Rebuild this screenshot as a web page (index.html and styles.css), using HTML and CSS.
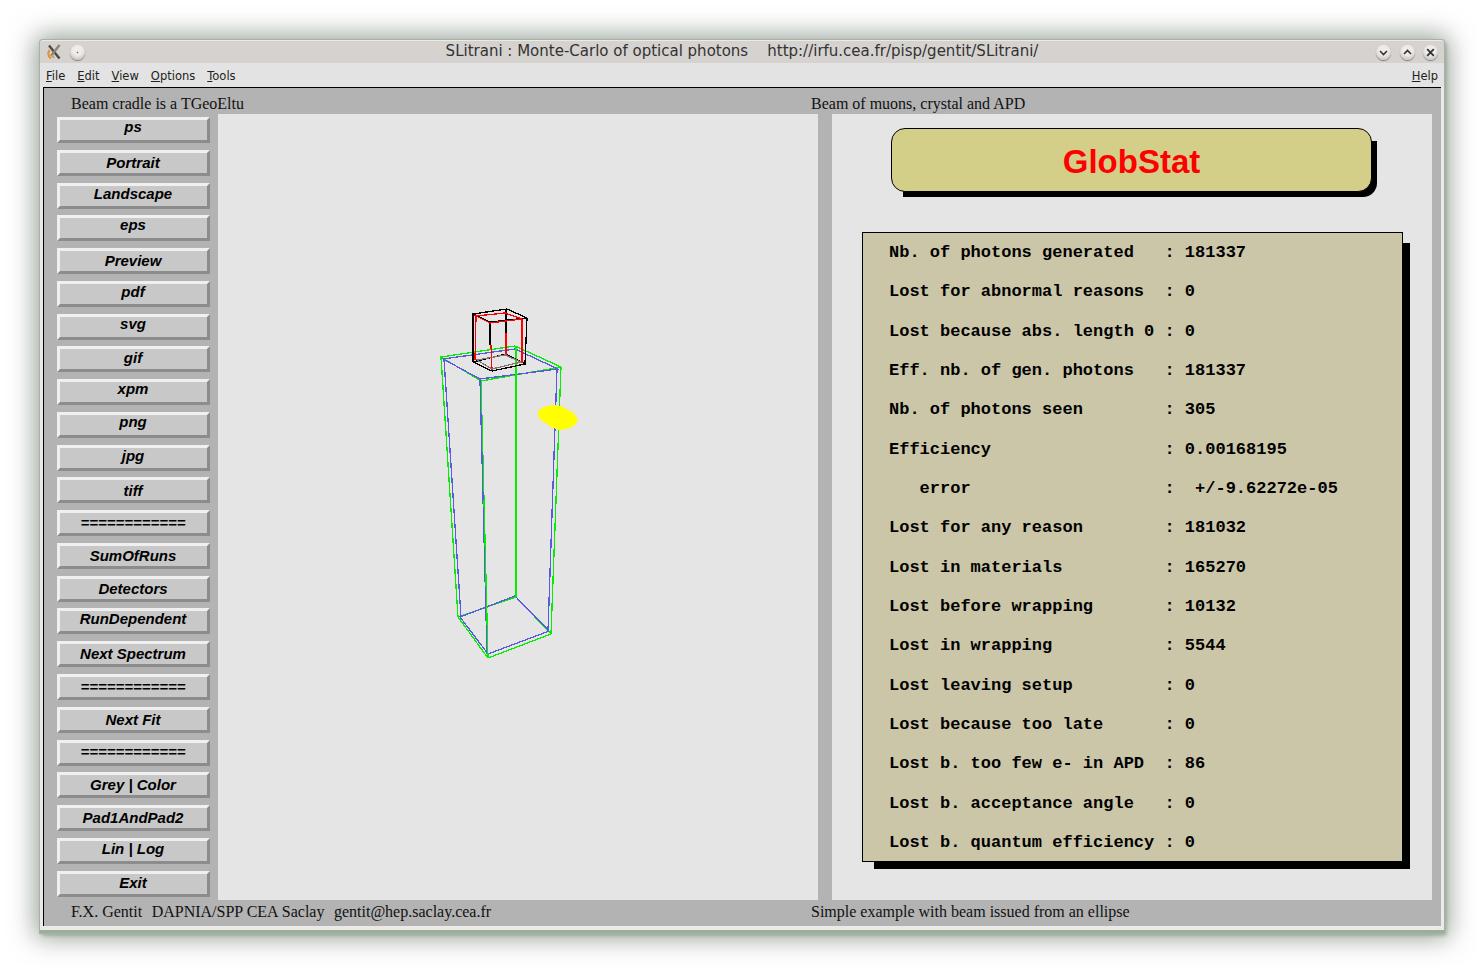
FILE: index.html
```html
<!DOCTYPE html>
<html lang="en">
<head>
    <meta charset="UTF-8">
    <title>SLitrani</title>
    <link rel="stylesheet" href="styles.css">
</head>
<body>
    <div class="window">
        <div class="titlebar">
            <div class="wm-left">
                <svg class="app-icon" width="16" height="16" viewBox="0 0 16 16">
                    <path d="M3 1.5 L13.5 14.5" stroke="#4a4a48" stroke-width="2.4" fill="none"/>
                    <path d="M13.5 1 L5 12" stroke="#8f8574" stroke-width="2.4" fill="none"/>
                    <path d="M3.5 6 Q0.5 11 5 14.5" stroke="#e8902e" stroke-width="2" fill="none"/>
                    <path d="M6 11 L8 14" stroke="#c9a04a" stroke-width="1.5" fill="none"/>
                </svg>
                <span class="wm-btn"><svg width="15" height="15" viewBox="0 0 15 15"><circle cx="7.5" cy="7.5" r="0.8" fill="#666"/></svg></span>
            </div>
            <div class="title-text">SLitrani : Monte-Carlo of optical photons &nbsp;&nbsp; http://irfu.cea.fr/pisp/gentit/SLitrani/</div>
            <div class="wm-right">
                <span class="wm-btn"><svg width="15" height="15" viewBox="0 0 15 15"><path d="M4 6 L7.5 9.5 L11 6" stroke="#333" stroke-width="1.6" fill="none"/></svg></span>
                <span class="wm-btn"><svg width="15" height="15" viewBox="0 0 15 15"><path d="M4 9 L7.5 5.5 L11 9" stroke="#333" stroke-width="1.6" fill="none"/></svg></span>
                <span class="wm-btn"><svg width="15" height="15" viewBox="0 0 15 15"><path d="M4.2 4.2 L10.8 10.8 M10.8 4.2 L4.2 10.8" stroke="#333" stroke-width="1.8" fill="none"/></svg></span>
            </div>
        </div>
        <div class="menubar">
            <span class="menu"><u>F</u>ile</span>
            <span class="menu"><u>E</u>dit</span>
            <span class="menu"><u>V</u>iew</span>
            <span class="menu"><u>O</u>ptions</span>
            <span class="menu"><u>T</u>ools</span>
            <span class="menu help"><u>H</u>elp</span>
        </div>
        <div class="canvas">
            <div class="caption-row top">
                <div class="caption first">Beam cradle is a TGeoEltu</div>
                <div class="caption">Beam of muons, crystal and APD</div>
            </div>
            <div class="pads">
                <div class="buttons">
                    <div class="btn up3">ps</div>
                    <div class="btn">Portrait</div>
                    <div class="btn up2">Landscape</div>
                    <div class="btn up3">eps</div>
                    <div class="btn">Preview</div>
                    <div class="btn up2">pdf</div>
                    <div class="btn up3">svg</div>
                    <div class="btn up1">gif</div>
                    <div class="btn up3">xpm</div>
                    <div class="btn up3">png</div>
                    <div class="btn up2">jpg</div>
                    <div class="btn down1">tiff</div>
                    <div class="btn">============</div>
                    <div class="btn">SumOfRuns</div>
                    <div class="btn">Detectors</div>
                    <div class="btn up2">RunDependent</div>
                    <div class="btn">Next Spectrum</div>
                    <div class="btn">============</div>
                    <div class="btn">Next Fit</div>
                    <div class="btn up1">============</div>
                    <div class="btn">Grey | Color</div>
                    <div class="btn">Pad1AndPad2</div>
                    <div class="btn up2">Lin | Log</div>
                    <div class="btn up1">Exit</div>
                </div>
                <div class="pad">
                    <svg class="wire" width="600" height="786" viewBox="218 114 600 786">
                        <g class="green">
                            <path d="M441 357 L515 346 L561 367 L481 381 Z"/>
                            <path d="M458 617 L516 597 L551 634 L488 658 Z"/>
                            <path d="M441 357 L458 617 M561 367 L551 634 M481 381 L488 658"/>
                        </g>
                        <g class="blue">
                            <path d="M443 359 L515 349 L558 369 L480 379 Z"/>
                            <path d="M460 617 L515 596 L549 631 L488 654 Z"/>
                            <path d="M444 359 L461 617 M557 369 L548 631 M480 379 L487 654"/>
                        </g>
                        <g class="green">
                            <path d="M516 346 L516 597 M484 500 L488 658"/>
                        </g>
                        <g class="black">
                            <path d="M473 314 L507 309 L527 318 L490 322 Z"/>
                            <path d="M473 314 L473 362 L492 371 L525 364 L527 318"/>
                            <path d="M490 322 L490 345 M506 309 L506 333"/>
                            <path d="M473 362 L506 354 L525 364"/>
                        </g>
                        <g class="red">
                            <path d="M476 316 L505 313 L522 319 L490 323 Z"/>
                            <path d="M476 316 L475 360 M522 319 L522 363 M491 345 L492 370 M506 333 L506 355"/>
                        </g>
                        <path class="brown" d="M477 360 L505 355 L521 362 L492 369 Z"/>
                        <path class="blob" d="M538 411 L544 407 L552 405 L561 406 L568 410 L574 413 L578 420 L574 426 L567 429 L559 430 L551 427 L546 423 L539 419 Z"/>
                    </svg>
                </div>
                <div class="divider"></div>
                <div class="pad stats-pad">
                    <div class="pave">GlobStat</div>
                    <div class="stats">
                        <div>Nb. of photons generated   : 181337</div>
                        <div>Lost for abnormal reasons  : 0</div>
                        <div>Lost because abs. length 0 : 0</div>
                        <div>Eff. nb. of gen. photons   : 181337</div>
                        <div>Nb. of photons seen        : 305</div>
                        <div>Efficiency                 : 0.00168195</div>
                        <div>   error                   :  +/-9.62272e-05</div>
                        <div>Lost for any reason        : 181032</div>
                        <div>Lost in materials          : 165270</div>
                        <div>Lost before wrapping       : 10132</div>
                        <div>Lost in wrapping           : 5544</div>
                        <div>Lost leaving setup         : 0</div>
                        <div>Lost because too late      : 0</div>
                        <div>Lost b. too few e- in APD  : 86</div>
                        <div>Lost b. acceptance angle   : 0</div>
                        <div>Lost b. quantum efficiency : 0</div>
                    </div>
                </div>
            </div>
            <div class="caption-row bottom">
                <div class="caption first">F.X. Gentit &nbsp;<span class="gap">DAPNIA/SPP CEA Saclay</span> &nbsp;<span class="gap">gentit@hep.saclay.cea.fr</span></div>
                <div class="caption">Simple example with beam issued from an ellipse</div>
            </div>
        </div>
    </div>
</body>
</html>
```

FILE: styles.css
```css
html, body { margin: 0; background: #fff; }
body { padding: 40px; width: 1404px; height: 892px; }

.window {
    width: 1404px;
    height: 893px;
    box-sizing: border-box;
    padding: 1px 3px 7px 3px;
    background: #eceae8;
    border-radius: 3px 3px 0 0;
    box-shadow: inset 0 -3px 0 #9aae9a, 0 0 0 1px #a3b4a3, 2px 2px 4px #8ea08e, 0 0 26px 5px rgba(70, 85, 70, .55);
}

.titlebar {
    display: flex;
    align-items: center;
    justify-content: space-between;
    box-sizing: border-box;
    height: 22px;
    margin: 0 -3px;
    padding: 0 6px;
    background: #d6d2cf;
    color: #333;
    font: 15px "DejaVu Sans", sans-serif;
}
.title-text { flex: 1; padding-bottom: 2px; text-align: center; white-space: nowrap; }
.wm-left, .wm-right { display: flex; align-items: center; width: 62px; }
.wm-left { gap: 8px; }
.wm-right { gap: 8.5px; justify-content: flex-end; }
.app-icon { display: block; }
.wm-btn {
    display: block;
    width: 15px;
    height: 15px;
    border-radius: 50%;
    background: radial-gradient(circle at 50% 35%, #eeebe8 40%, #b5b1ae);
    box-shadow: 0 1px 1px #7f7d7b;
}
.wm-btn svg { display: block; }

.menubar {
    display: flex;
    align-items: center;
    gap: 12px;
    box-sizing: border-box;
    height: 24px;
    margin: 0 -3px;
    padding: 2px 6px 0;
    background: #e3e3e3;
    color: #222;
    font: 11.5px "DejaVu Sans", sans-serif;
}
.menu.help { margin-left: auto; }

.canvas {
    height: 839px;
    box-sizing: border-box;
    border-top: 1px solid #000;
    border-left: 1px solid #000;
    background: #b3b3b3;
    color: #111;
    font: 16px "Liberation Serif", serif;
}
.caption-row { display: flex; height: 26px; align-items: flex-end; white-space: pre-wrap; }
.caption-row.top { padding-bottom: 1px; box-sizing: border-box; }
.caption-row.bottom { align-items: center; padding-bottom: 2px; box-sizing: border-box; }
.caption.first { box-sizing: border-box; width: 767px; padding-left: 27px; }
.gap { margin-left: 1.5px; }

.pads { display: flex; height: 786px; }
.buttons {
    display: grid;
    grid-template-rows: repeat(24, 26px);
    row-gap: 6.78px;
    width: 153px;
    margin: 3px 8px 0 13px;
}
.btn {
    box-sizing: border-box;
    padding-right: 1px;
    border: 3px solid;
    border-color: #f0f0f0 #8c8c8c #8c8c8c #f0f0f0;
    background: #c8c8c8;
    color: #000;
    font: italic bold 15px/19px "Liberation Sans", sans-serif;
    text-align: center;
    white-space: nowrap;
}
.btn.down1 { line-height: 21px; }
.btn.up1 { line-height: 17px; }
.btn.up2 { line-height: 15px; }
.btn.up3 { line-height: 13px; }

.pad { width: 600px; background: #e5e5e5; }
.divider { width: 14px; }
.wire { display: block; }
.wire path { fill: none; shape-rendering: crispEdges; stroke-width: 1.3; }
.wire .green path { stroke: #00f000; }
.wire .blue path { stroke: #5a5ae0; }
.wire .black path { stroke: #000; }
.wire .red path { stroke: #f00; }
.wire .brown { stroke: #8a7070; }
.wire .blob { fill: #ff0; stroke: none; }

.stats-pad { box-sizing: border-box; padding: 14px 0 0 30px; isolation: isolate; }
.pave {
    position: relative;
    box-sizing: border-box;
    width: 481px;
    height: 64px;
    margin-left: 29px;
    border: 1px solid #000;
    border-radius: 14px;
    background: #d3cf88;
    color: #f00;
    font: bold 33px/66px "Liberation Sans", sans-serif;
    text-align: center;
}
.pave::after {
    content: "";
    position: absolute;
    z-index: -1;
    left: 11px;
    right: -6px;
    top: 12px;
    bottom: -6px;
    background: #000;
    border-radius: 0 0 14px 0;
}
.stats {
    position: relative;
    display: grid;
    grid-template-rows: repeat(16, 39.35px);
    box-sizing: border-box;
    width: 541px;
    height: 630px;
    margin-top: 40px;
    padding: 0 0 0 26px;
    border: 1px solid #000;
    background: #cbc6a8;
    color: #000;
    font: bold 17px/40px "Liberation Mono", monospace;
    white-space: pre;
}
.stats::after {
    content: "";
    position: absolute;
    z-index: -1;
    left: 11px;
    right: -8px;
    top: 10px;
    bottom: -8px;
    background: #000;
}
```
